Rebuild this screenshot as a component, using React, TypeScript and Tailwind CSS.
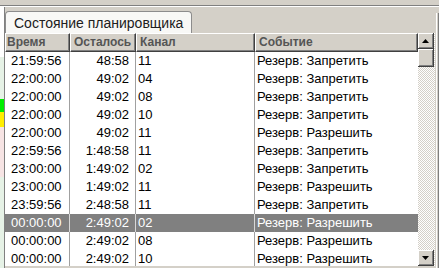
import React from "react";

const rows: [string, string, string, string][] = [
  ["21:59:56", "48:58", "11", "Резерв: Запретить"],
  ["22:00:00", "49:02", "04", "Резерв: Запретить"],
  ["22:00:00", "49:02", "08", "Резерв: Запретить"],
  ["22:00:00", "49:02", "10", "Резерв: Запретить"],
  ["22:00:00", "49:02", "11", "Резерв: Разрешить"],
  ["22:59:56", "1:48:58", "11", "Резерв: Запретить"],
  ["23:00:00", "1:49:02", "02", "Резерв: Запретить"],
  ["23:00:00", "1:49:02", "11", "Резерв: Разрешить"],
  ["23:59:56", "2:48:58", "11", "Резерв: Запретить"],
  ["00:00:00", "2:49:02", "02", "Резерв: Разрешить"],
  ["00:00:00", "2:49:02", "08", "Резерв: Разрешить"],
  ["00:00:00", "2:49:02", "10", "Резерв: Разрешить"],
];

function Arrow({ up }: { up: boolean }) {
  return (
    <svg width="7" height="4" viewBox="0 0 7 4">
      {up ? <polygon points="3.5,0 7,4 0,4" fill="#000" /> : <polygon points="0,0 7,0 3.5,4" fill="#000" />}
    </svg>
  );
}

function Btn({ children, h }: { children?: React.ReactNode; h: string }) {
  return (
    <div className={`${h} w-[16px] border-r border-b border-[#404040] bg-[#d4d0c8]`}>
      <div className="h-full w-full border-t border-l border-white flex items-center justify-center border-r-0">
        <div className="h-full w-full border-r border-b border-[#808080] flex items-center justify-center">
          {children}
        </div>
      </div>
    </div>
  );
}

export default function App() {
  return (
    <div className="w-[439px] h-[268px] bg-[#d4d0c8] overflow-hidden flex flex-col font-['Liberation_Sans',Arial,sans-serif]">
      <div className="h-[5px] shrink-0" />
      <div className="h-px bg-[#808080] shrink-0" />
      <div className="h-px bg-white shrink-0" />
      <div className="flex flex-1 min-h-0">
        <div className="w-[4px] flex flex-col shrink-0">
          <div className="h-[50px] bg-white" />
          <div className="h-[42px] bg-[#e6f2e6]" />
          <div className="h-[13px] bg-[#00ee00]" />
          <div className="h-[15px] bg-[#ffee00]" />
          <div className="h-[50px] bg-[#f6e4e4]" />
          <div className="flex-1 bg-[#e6f2e6]" />
        </div>
        <div className="w-px bg-[#808080] shrink-0" />
        <div className="flex-1 flex flex-col min-w-0">
          <div className="flex h-[26px] shrink-0 items-end">
            <div className="w-[187px] h-[22px] bg-[#f8f8f6] border border-b-0 border-[#8c8c8c] rounded-t-[4px] flex items-center pl-[8px] text-[14px] text-[#202020] leading-none">
              Состояние планировщика
            </div>
            <div className="flex-1 self-stretch flex justify-end">
              <div className="w-[3px] mt-[6px] border-l border-white border-r border-r-[#808080]" />
            </div>
          </div>
          <div className="flex flex-1 min-h-0">
            <div className="w-[413px] flex flex-col bg-white">
              <div className="flex h-[19px] shrink-0 text-[12px] font-bold text-[#555] leading-none">
                {[
                  ["w-[65px]", "Время", "pl-[1px]"],
                  ["w-[66px]", "Осталось", "pl-[3px]"],
                  ["w-[119px]", "Канал", "pl-[3px]"],
                  ["w-[163px]", "Событие", "pl-[3px]"],
                ].map(([w, t, p]) => (
                  <div key={t} className={`${w} bg-[#d4d0c8] border-t border-l border-white border-r border-b border-r-[#404040] border-b-[#404040] flex`}>
                    <div className={`flex-1 border-r border-b border-[#808080] flex items-center ${p}`}>{t}</div>
                  </div>
                ))}
              </div>
              <div className="flex-1 min-h-0 overflow-hidden flex flex-col text-[13px] leading-[18px]">
                {rows.map((r, i) => {
                  const sel = i === 9;
                  const line = sel ? "border-[#d8d8d8]" : "border-[#a0a0a0]";
                  return (
                    <div key={i} className={`flex h-[18px] shrink-0 ${sel ? "bg-[#808080] text-white" : "text-black"}`}>
                      <div className={`w-[65px] pl-[6px] border-r ${line}`}>{r[0]}</div>
                      <div className={`w-[66px] pr-[6px] text-right border-r ${line}`}>{r[1]}</div>
                      <div className={`w-[119px] pl-[2px] border-r ${line}`}>{r[2]}</div>
                      <div className="w-[163px] pl-[2px]">{r[3]}</div>
                    </div>
                  );
                })}
              </div>
              <div className="h-[2px] bg-[#d4d0c8] shrink-0" />
            </div>
            <div className="w-[17px] flex flex-col">
              <div className="flex-1 flex flex-col bg-[repeating-conic-gradient(#d4d0c8_0%_25%,#ffffff_0%_50%)] bg-[length:2px_2px]">
                <Btn h="h-[16px]"><Arrow up /></Btn>
                <Btn h="h-[18px]" />
                <div className="flex-1" />
                <Btn h="h-[16px]"><Arrow up={false} /></Btn>
              </div>
              <div className="h-[2px] bg-[#d4d0c8] shrink-0" />
            </div>
            <div className="flex-1 flex justify-end">
              <div className="w-[3px] border-l border-white border-r border-r-[#808080]" />
            </div>
          </div>
        </div>
      </div>
    </div>
  );
}
